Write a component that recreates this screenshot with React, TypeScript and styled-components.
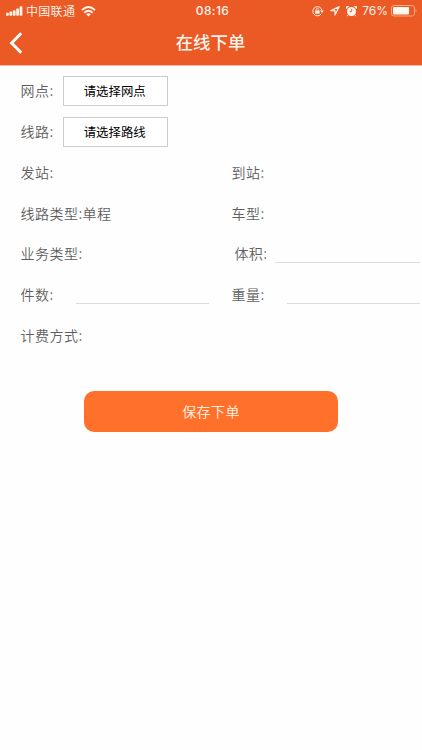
import React from "react";
import styled, { createGlobalStyle } from "styled-components";

const GlobalStyle = createGlobalStyle`
  * { box-sizing: border-box; }
  body { margin: 0; background: #fefefe; }
  button, input { font-family: inherit; }
`;

const Screen = styled.div`
  height: 750px;
  overflow: hidden;
  background: #fefefe;
  font-family: "Noto Sans CJK SC", sans-serif;
`;

const Header = styled.header`
  height: 66px;
  background: #eb5a24;
  border-bottom: 1px solid #ffb9a0;
  color: #fff4ec;
`;

const StatusBar = styled.div`
  height: 22px;
  display: grid;
  grid-template-columns: 1fr auto 1fr;
  align-items: center;
  padding: 0 5px 0 6px;
`;

const StatusGroup = styled.div<{ $end?: boolean }>`
  display: flex;
  align-items: center;
  justify-content: ${(p) => (p.$end ? "flex-end" : "flex-start")};
  height: 22px;
`;

const Carrier = styled.span`
  margin: 0 6px 0 3px;
  font-size: 12px;
  line-height: 22px;
  letter-spacing: 0.3px;
  font-weight: 350;
`;

const Clock = styled.span`
  padding-left: 2px;
  font: 500 12px/22px Inter, sans-serif;
  letter-spacing: 0.4px;
`;

const Percent = styled.span`
  margin: 0 3px 0 5px;
  font: 400 12px/22px Inter, sans-serif;
`;

const NavBar = styled.div`
  height: 42px;
  display: grid;
  grid-template-columns: 60px 1fr 60px;
  align-items: center;
`;

const BackButton = styled.button`
  display: flex;
  padding: 0 0 0 9px;
  border: 0;
  background: none;
  color: inherit;
`;

const Title = styled.h1`
  margin: 0;
  padding: 0 1px 2px 0;
  text-align: center;
  font-size: 17.4px;
  line-height: 40px;
  font-weight: 500;
`;

const Form = styled.form`
  padding-top: 4.7px;
`;

const Row = styled.div`
  display: grid;
  grid-template-columns: repeat(2, minmax(0, 1fr));
  height: 40.8px;
`;

const Cell = styled.div<{ $indent?: number }>`
  display: flex;
  align-items: center;
  padding: 0 2px 0 ${(p) => p.$indent ?? 20.6}px;
  color: #5e5e5e;
  font-size: 14px;
  font-weight: 350;
  letter-spacing: 0.45px;
  white-space: nowrap;
`;

const Label = styled.span`
  padding-bottom: 1.6px;
`;

const Picker = styled.button`
  width: 105px;
  height: 30px;
  margin-left: 9px;
  padding: 0 1px 0 0;
  border: 1px solid #ccc;
  background: #fff;
  color: #000;
  font-size: 12.4px;
  line-height: 28px;
`;

const Field = styled.input<{ $gap: number }>`
  flex: 1;
  min-width: 0;
  height: 18px;
  margin-left: ${(p) => p.$gap}px;
  padding: 0;
  border: 0;
  border-bottom: 1px solid #ddd;
  border-radius: 0;
  outline: 0;
  background: transparent;
`;

const Submit = styled.button`
  display: block;
  width: 254px;
  height: 41px;
  margin: 35px auto 0;
  padding: 0 0 2px;
  border: 0;
  border-radius: 10px;
  background: #ff712b;
  color: #fff1e5;
  font-size: 14px;
  font-weight: 350;
  letter-spacing: 0.4px;
`;

const Signal = () => (
  <svg width="17" height="10" viewBox="0 0 17 10" fill="currentColor">
    <rect x="0" y="6.7" width="2.8" height="3" rx="0.8" />
    <rect x="3.4" y="5.6" width="2.8" height="4.1" rx="0.8" />
    <rect x="6.8" y="4.2" width="2.8" height="5.5" rx="0.8" />
    <rect x="10.2" y="2.4" width="2.8" height="7.3" rx="0.8" />
    <rect x="13.6" y="0.3" width="2.8" height="9.4" rx="0.8" />
  </svg>
);

const Wifi = () => (
  <svg width="15" height="11" viewBox="0 0 15 11" fill="none" stroke="currentColor" strokeWidth="1.9">
    <path d="M1 4.1Q7.5-1.9 14 4.1" />
    <path d="M3.4 6.7Q7.5 2.9 11.6 6.7" />
    <path d="M7.5 10.5L5.2 8.2Q7.5 6.3 9.8 8.2Z" fill="currentColor" stroke="none" />
  </svg>
);

const RotationLock = () => (
  <svg width="12" height="11" viewBox="0 0 12 11" fill="none" stroke="currentColor">
    <path d="M9.2 7.9A4.6 4.6 0 1 1 10 4.6" strokeWidth="1" />
    <path d="M8.1 4.6H11.8L10 6.9Z" fill="currentColor" stroke="none" />
    <rect x="3.2" y="4.5" width="4.4" height="3.2" fill="currentColor" stroke="none" />
    <path d="M4.2 4.7V3.5a1.2 1.2 0 0 1 2.4 0V4.7" strokeWidth="0.8" />
  </svg>
);

const Location = () => (
  <svg width="10" height="10" viewBox="0 0 10 10" fill="none" stroke="currentColor" strokeWidth="1.2" strokeLinejoin="round">
    <path d="M9.2 0.6L0.7 4.7H5V9Z" />
  </svg>
);

const Alarm = () => (
  <svg width="11" height="11" viewBox="0 0 11 11" fill="currentColor">
    <circle cx="5.5" cy="5.5" r="4.5" />
    <path d="M0.2 3A2 2 0 0 1 3.2 0.3ZM10.8 3A2 2 0 0 0 7.8 0.3Z" />
    <path d="M2 9L1.2 10.2M9 9L9.8 10.2" stroke="currentColor" />
    <path d="M5.7 2.8V5.7H3.6" fill="none" stroke="#eb5a24" strokeWidth="0.9" />
  </svg>
);

const Battery = () => (
  <svg width="26" height="12" viewBox="0 0 26 12" fill="none">
    <rect x="0.5" y="0.5" width="23" height="10.5" rx="2.5" stroke="#ffa982" />
    <rect x="2" y="2" width="16" height="7.5" rx="1" fill="#fff8f2" />
    <path d="M24.6 4Q26.4 5.7 24.6 7.5Z" fill="#ffa982" />
  </svg>
);

const StatusIcons = styled.div`
  display: flex;
  align-items: center;
  gap: 6px;
`;

export default function App() {
  return (
    <Screen>
      <GlobalStyle />
      <Header>
        <StatusBar>
          <StatusGroup>
            <Signal />
            <Carrier>中国联通</Carrier>
            <Wifi />
          </StatusGroup>
          <Clock>08:16</Clock>
          <StatusGroup $end>
            <StatusIcons>
              <RotationLock />
              <Location />
              <Alarm />
            </StatusIcons>
            <Percent>76%</Percent>
            <Battery />
          </StatusGroup>
        </StatusBar>
        <NavBar>
          <BackButton type="button" aria-label="返回">
            <svg width="14" height="22" viewBox="0 0 14 22" fill="none" stroke="#fff" strokeWidth="3">
              <path d="M12.2 1.2L2.6 11L12.2 20.8" />
            </svg>
          </BackButton>
          <Title>在线下单</Title>
        </NavBar>
      </Header>
      <Form>
        <Row>
          <Cell><Label>网点:</Label><Picker type="button">请选择网点</Picker></Cell>
        </Row>
        <Row>
          <Cell><Label>线路:</Label><Picker type="button">请选择路线</Picker></Cell>
        </Row>
        <Row>
          <Cell><Label>发站:</Label></Cell>
          <Cell><Label>到站:</Label></Cell>
        </Row>
        <Row>
          <Cell><Label>线路类型:单程</Label></Cell>
          <Cell><Label>车型:</Label></Cell>
        </Row>
        <Row>
          <Cell><Label>业务类型:</Label></Cell>
          <Cell $indent={23.4}><Label>体积:</Label><Field $gap={7.5} aria-label="体积" /></Cell>
        </Row>
        <Row>
          <Cell><Label>件数:</Label><Field $gap={21.8} aria-label="件数" /></Cell>
          <Cell><Label>重量:</Label><Field $gap={21.8} aria-label="重量" /></Cell>
        </Row>
        <Row>
          <Cell><Label>计费方式:</Label></Cell>
        </Row>
        <Submit type="button">保存下单</Submit>
      </Form>
    </Screen>
  );
}
